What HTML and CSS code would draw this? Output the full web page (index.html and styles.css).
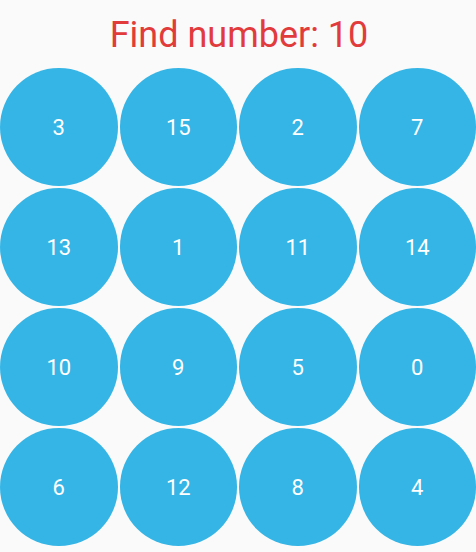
FILE: index.html
```html
<!DOCTYPE html>
<html>
<head>
<meta charset="utf-8">
<link rel="stylesheet" href="styles.css">
</head>
<body>
<div class="screen">
  <h1 class="title">Find number: 10</h1>
  <div class="grid">
    <div class="ball">3</div><div class="ball">15</div><div class="ball">2</div><div class="ball">7</div>
    <div class="ball">13</div><div class="ball">1</div><div class="ball">11</div><div class="ball">14</div>
    <div class="ball">10</div><div class="ball">9</div><div class="ball">5</div><div class="ball">0</div>
    <div class="ball">6</div><div class="ball">12</div><div class="ball">8</div><div class="ball">4</div>
  </div>
</div>
</body>
</html>
```

FILE: styles.css
```css
html, body {
  margin: 0;
  padding: 0;
  background: #fafafa;
  font-family: Roboto, "Noto Sans", sans-serif;
}
.screen {
  width: 476px;
  height: 552px;
  overflow: hidden;
}
.title {
  margin: 0;
  height: 68px;
  box-sizing: border-box;
  padding-top: 13px;
  padding-left: 2px;
  text-align: center;
  font-size: 36px;
  line-height: 44px;
  font-weight: 400;
  color: #e23b3c;
}
.grid {
  display: grid;
  grid-template-columns: repeat(4, 1fr);
  grid-auto-rows: 118px;
  gap: 2px;
}
.ball {
  border-radius: 50%;
  background: #35b5e5;
  color: #ffffff;
  font-size: 22px;
  display: flex;
  align-items: center;
  justify-content: center;
}
```
